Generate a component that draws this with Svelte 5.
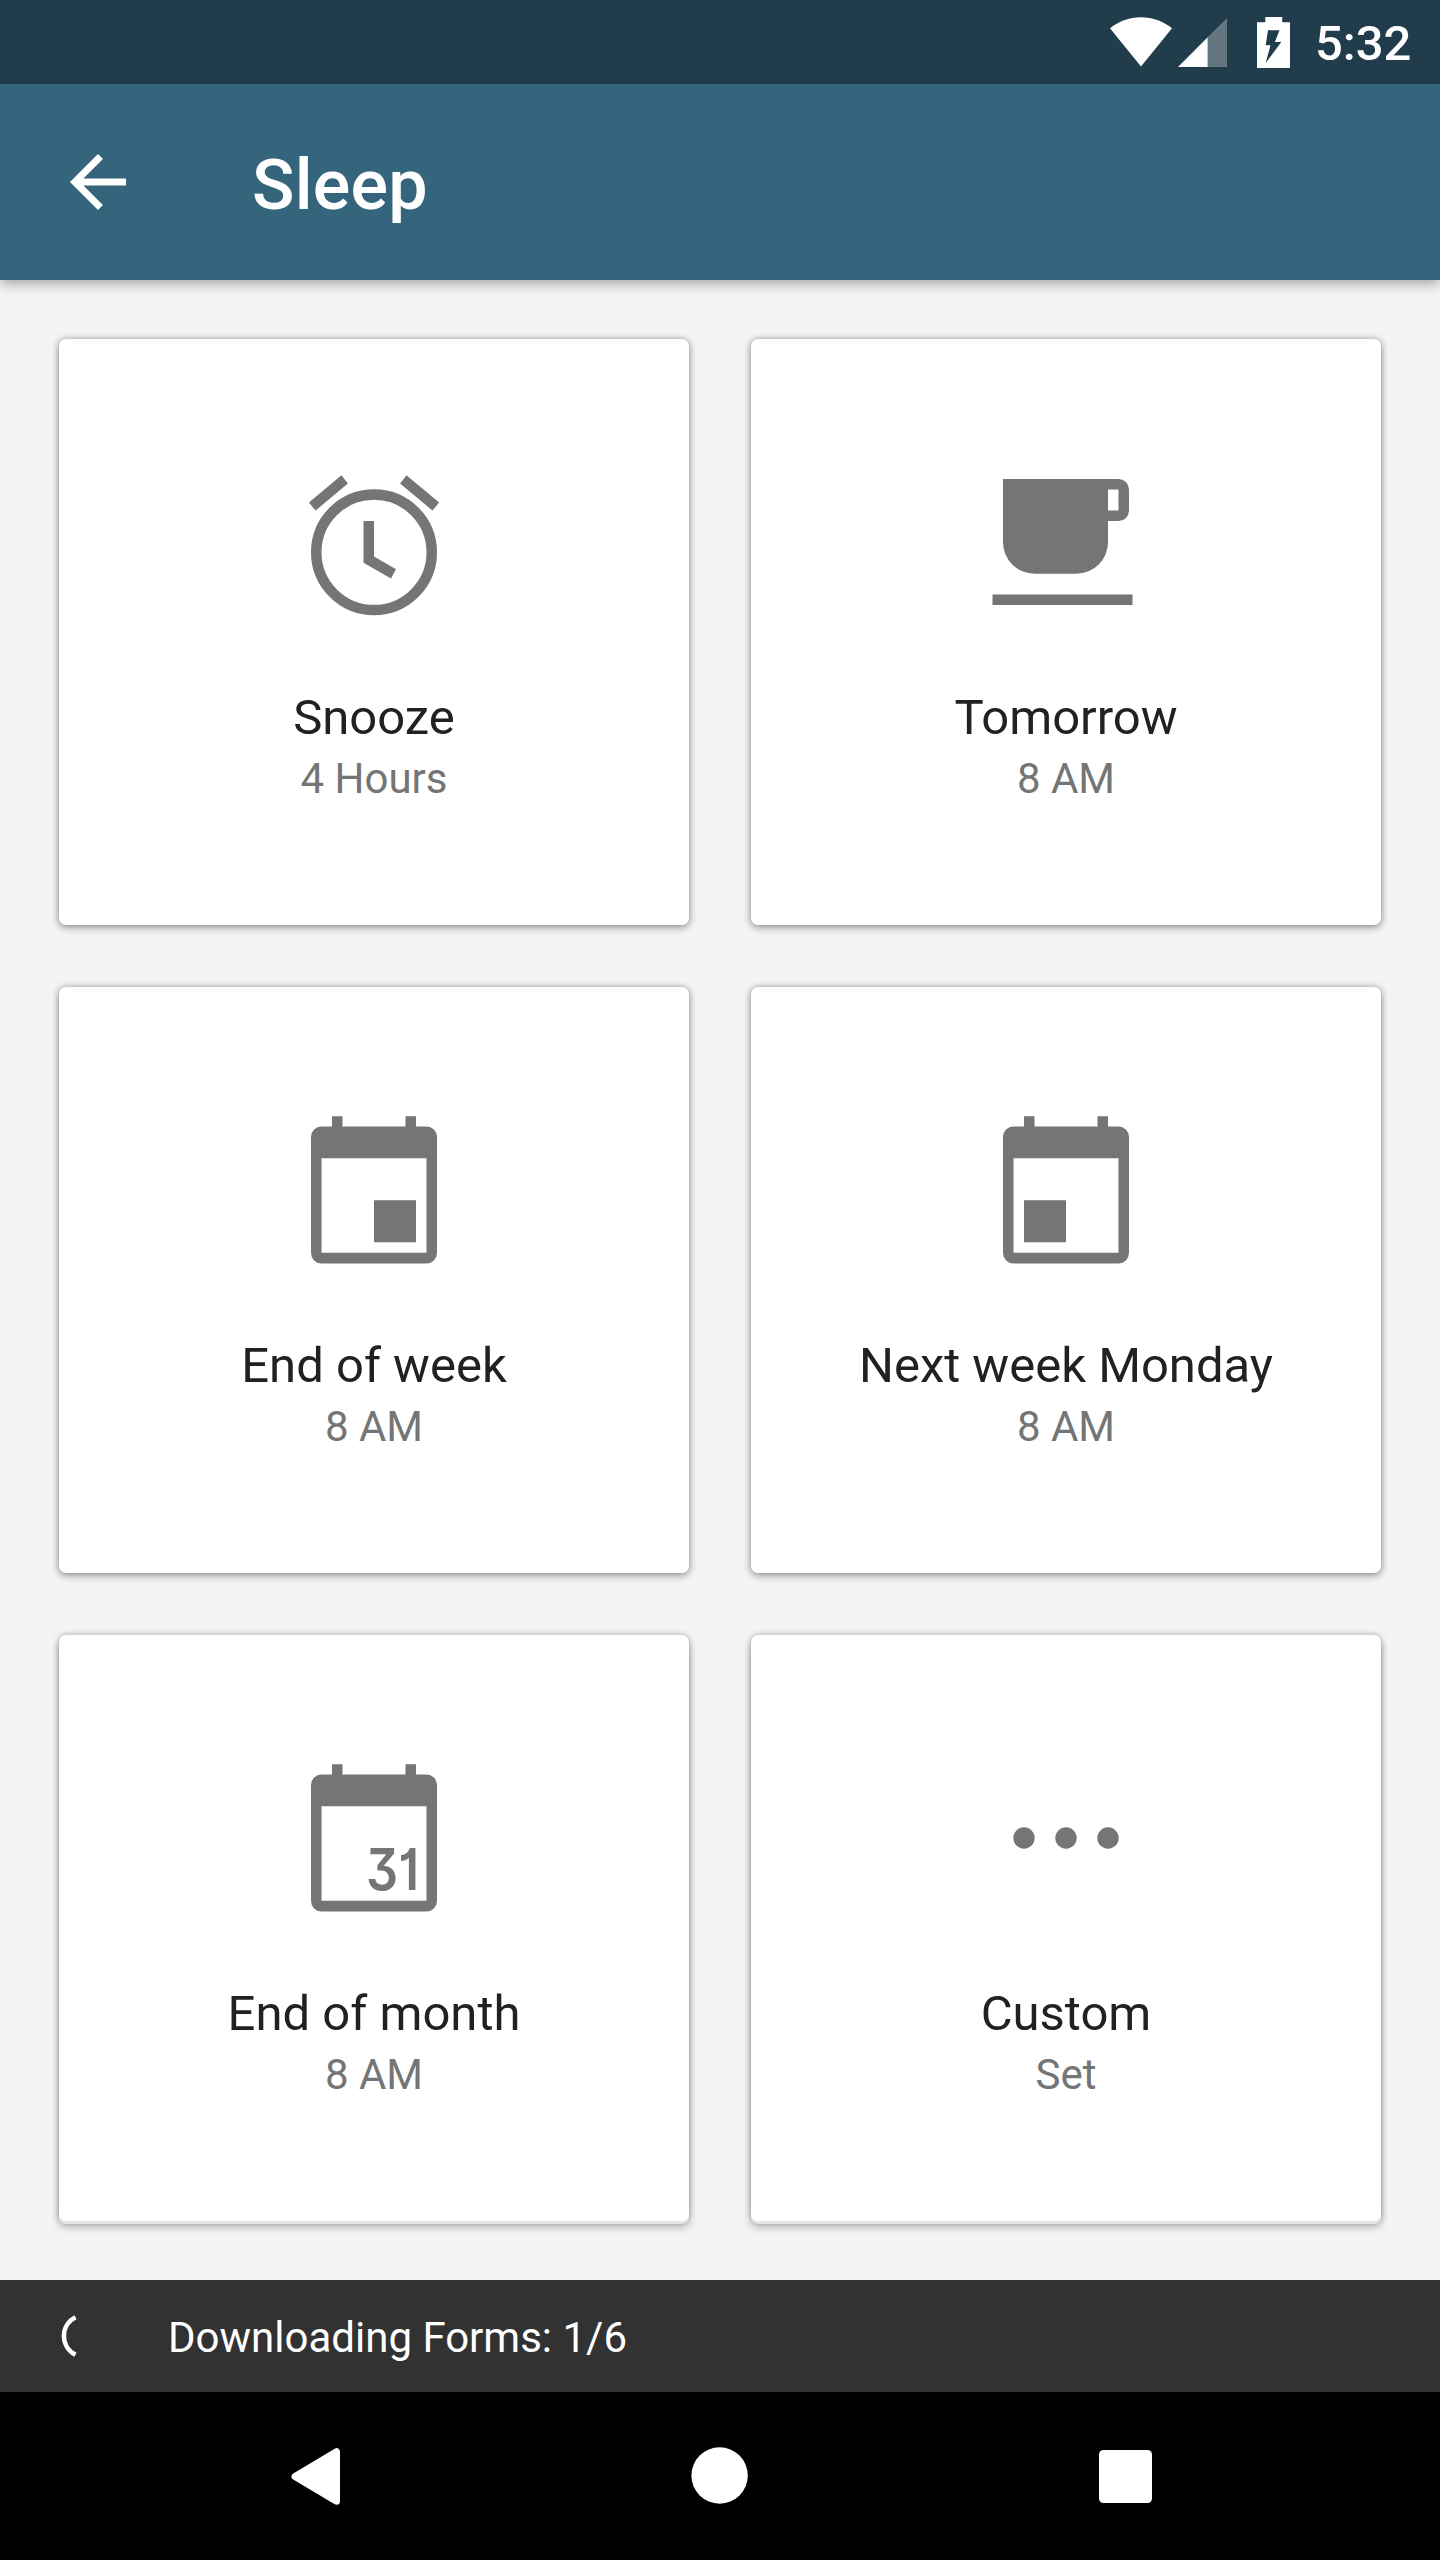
<script lang="ts">
  type IconName = 'alarm' | 'cup' | 'week-end' | 'week-start' | 'month-end' | 'more';

  interface SleepOption {
    icon: IconName;
    title: string;
    detail: string;
  }

  const options: SleepOption[] = [
    { icon: 'alarm', title: 'Snooze', detail: '4 Hours' },
    { icon: 'cup', title: 'Tomorrow', detail: '8 AM' },
    { icon: 'week-end', title: 'End of week', detail: '8 AM' },
    { icon: 'week-start', title: 'Next week Monday', detail: '8 AM' },
    { icon: 'month-end', title: 'End of month', detail: '8 AM' },
    { icon: 'more', title: 'Custom', detail: 'Set' }
  ];

  const total = 6;
  let current = $state(1);
  let progressLabel = $derived(`Downloading Forms: ${current}/${total}`);
</script>

{#snippet calendar()}
  <path
    fill-rule="evenodd"
    d="M42 7.300h10.500v10.200h63V7.300H126v10.200h10.500A10.500 10.500 0 0 1 147 28v116a10.500 10.500 0 0 1-10.500 10.500h-105A10.500 10.500 0 0 1 21 144V28a10.500 10.500 0 0 1 10.500-10.500H42zM31.500 49.300v94.500h105V49.300z"
  />
{/snippet}

<div class="screen">
  <div class="status-bar">
    <svg class="wifi" viewBox="0 0 62 50" aria-hidden="true">
      <path d="M0 11.300C8.500 4.600 19 .3 31 .3s22.500 4.300 31 11L31 49.500z" />
    </svg>
    <svg class="signal" viewBox="0 0 49 49" aria-hidden="true">
      <path d="M29.700 19.300L49 0v49H29.700z" opacity="0.3" />
      <path d="M0 49L29.700 19.300V49z" />
    </svg>
    <svg class="battery" viewBox="0 0 33 51" aria-hidden="true">
      <path
        fill-rule="evenodd"
        d="M8.300 0h16.900v5.200H33V51H0V5.200h8.300zM11 13.300L8.700 28.300h4.800L8.700 46 24.300 25h-6.400L22.500 13.300z"
      />
    </svg>
    <span class="clock">5:32</span>
  </div>

  <header class="toolbar">
    <button class="back" aria-label="Navigate up">
      <svg viewBox="0 0 24 24" aria-hidden="true">
        <path d="M20 11H7.830l5.590-5.590L12 4l-8 8 8 8 1.410-1.410L7.830 13H20v-2z" />
      </svg>
    </button>
    <h1>Sleep</h1>
  </header>

  <main class="grid">
    {#each options as option (option.title)}
      <button class="card">
        <svg class="icon" viewBox="0 0 168 168" aria-hidden="true">
          {#if option.icon === 'alarm'}
            <circle class="ring" cx="84" cy="91.300" r="57.750" />
            <path d="M51.500 14.300L57.900 22.400 25.500 49.600 18.900 41.400z" />
            <path d="M116.500 14.300L110.100 22.400 142.500 49.600 149.100 41.400z" />
            <path d="M73.500 60H84v35.500l22 12.800-5 9.300-27.500-15.900z" />
          {:else if option.icon === 'cup'}
            <path
              fill-rule="evenodd"
              d="M21 18h115.500A10.500 10.500 0 0 1 147 28.500v21A10.500 10.500 0 0 1 136.500 60H126v21.200a31.500 31.500 0 0 1-31.500 31.500h-42A31.500 31.500 0 0 1 21 81.200zM126 28.500v21h10.500v-21z"
            />
            <path d="M10.500 133.500h140V144h-140z" />
          {:else if option.icon === 'week-end'}
            {@render calendar()}
            <path d="M84 91.300h42v42H84z" />
          {:else if option.icon === 'week-start'}
            {@render calendar()}
            <path d="M42 91.300h42v42H42z" />
          {:else if option.icon === 'month-end'}
            {@render calendar()}
            <text class="day" x="76" y="133.300" textLength="53" lengthAdjust="spacingAndGlyphs">31</text>
          {:else}
            <circle cx="42" cy="81" r="10.700" />
            <circle cx="84" cy="81" r="10.700" />
            <circle cx="126" cy="81" r="10.700" />
          {/if}
        </svg>
        <span class="title">{option.title}</span>
        <span class="detail">{option.detail}</span>
      </button>
    {/each}
  </main>

  <div class="snackbar" role="status">
    <svg class="spinner" viewBox="0 0 56 56" aria-hidden="true">
      <path d="M19.500 9.300A20.900 20.900 0 0 0 19.500 46.700" />
    </svg>
    <span>{progressLabel}</span>
  </div>

  <nav class="nav-bar">
    <button aria-label="Back">
      <svg viewBox="0 0 84 84" aria-hidden="true">
        <path class="triangle" d="M23 42.500L64.500 17.800V67.200z" />
      </svg>
    </button>
    <button aria-label="Home">
      <svg viewBox="0 0 84 84" aria-hidden="true">
        <circle cx="41.600" cy="41.500" r="28.200" />
      </svg>
    </button>
    <button aria-label="Overview">
      <svg viewBox="0 0 84 84" aria-hidden="true">
        <rect x="15" y="16" width="53" height="53" rx="4.500" />
      </svg>
    </button>
  </nav>
</div>

<style>
  :global(body) {
    margin: 0;
  }

  button {
    padding: 0;
    border: 0;
    background: none;
    color: inherit;
    font: inherit;
  }

  svg {
    display: block;
    flex-shrink: 0;
  }

  .screen {
    display: flex;
    flex-direction: column;
    width: 1440px;
    height: 2560px;
    overflow: hidden;
    background: #f4f4f4;
    font-family: Roboto, sans-serif;
  }

  .status-bar {
    display: flex;
    justify-content: flex-end;
    align-items: center;
    height: 84px;
    background: #213d4b;
    color: #fff;
    fill: #fff;
  }

  .wifi {
    width: 62px;
    height: 50px;
  }

  .signal {
    width: 49px;
    height: 49px;
    margin-left: 6px;
  }

  .battery {
    width: 33px;
    height: 51px;
    margin-left: 30px;
  }

  .clock {
    width: 125px;
    margin-left: 25px;
    padding-top: 4px;
    font-size: 49px;
    font-weight: 500;
    line-height: 84px;
  }

  .toolbar {
    display: flex;
    align-items: center;
    height: 196px;
    padding-left: 56px;
    background: #35657c;
    box-shadow: 0 4px 12px rgba(0, 0, 0, 0.32);
    color: #fff;
    fill: #fff;
  }

  .back {
    width: 84px;
    height: 84px;
  }

  h1 {
    margin: 5px 0 0 112px;
    font-size: 70px;
    font-weight: 500;
    letter-spacing: 0.25px;
    line-height: 98px;
  }

  .grid {
    display: grid;
    flex: 1;
    grid-template-columns: 630px 630px;
    grid-auto-rows: 586px;
    gap: 62px;
    padding: 59px 59px 0;
  }

  .card {
    display: flex;
    flex-direction: column;
    align-items: center;
    justify-content: flex-start;
    padding-top: 122px;
    border-radius: 7px;
    background: #fff;
    box-shadow:
      0 3px 8px rgba(0, 0, 0, 0.28),
      0 0 6px rgba(0, 0, 0, 0.28);
  }

  .card:nth-last-child(-n + 2) {
    box-shadow:
      0 3px 0 #e6e6e6,
      0 6px 8px rgba(0, 0, 0, 0.28),
      0 0 6px rgba(0, 0, 0, 0.3);
  }

  .icon {
    width: 168px;
    height: 168px;
    fill: #757575;
  }

  .ring {
    fill: none;
    stroke: #757575;
    stroke-width: 10.5;
  }

  .day {
    font-family: Inter, sans-serif;
    font-size: 58px;
    font-weight: 600;
    font-feature-settings: 'cv09', 'cv01';
  }

  .title {
    margin-top: 56px;
    color: #212121;
    font-size: 49px;
    line-height: 66px;
  }

  .detail {
    color: #757575;
    font-size: 42px;
    line-height: 56px;
  }

  .snackbar {
    display: flex;
    align-items: center;
    gap: 56px;
    height: 112px;
    padding-left: 56px;
    background: #323232;
    color: #fff;
    font-size: 42px;
    line-height: 56px;
  }

  .snackbar span {
    padding-top: 4px;
  }

  .spinner {
    width: 56px;
    height: 56px;
    fill: none;
    stroke: #fff;
    stroke-width: 4.5;
  }

  .nav-bar {
    display: flex;
    justify-content: center;
    align-items: center;
    gap: 322px;
    height: 168px;
    background: #000;
    fill: #fff;
  }

  .nav-bar svg {
    width: 84px;
    height: 84px;
  }

  .triangle {
    stroke: #fff;
    stroke-width: 7;
    stroke-linejoin: round;
  }
</style>
